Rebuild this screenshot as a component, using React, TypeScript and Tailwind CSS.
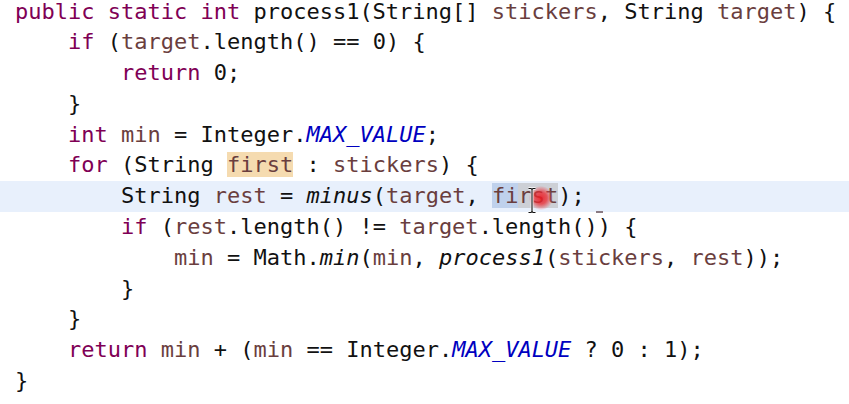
type Kind = "t" | "kw" | "var" | "fld" | "it" | "occ" | "selA" | "selB";
type Token = [string, Kind];

const styles: Record<Kind, string> = {
  t: "text-[#111111]",
  kw: "text-[#7f0055]",
  var: "text-[#6a3e3e]",
  fld: "text-[#0000c0] italic",
  it: "text-[#111111] italic",
  occ: "text-[#6a3e3e] bg-[#f5dbb0]",
  selA: "text-[#6a3e3e] bg-[#bfd1ec]",
  selB: "text-[#6a3e3e] bg-[#cdd0d6]",
};

const lines: { indent: number; tokens: Token[]; current?: boolean }[] = [
  {
    indent: 0,
    tokens: [
      ["public static int", "kw"],
      [" process1(String[] ", "t"],
      ["stickers", "var"],
      [", String ", "t"],
      ["target", "var"],
      [") {", "t"],
    ],
  },
  {
    indent: 4,
    tokens: [
      ["if", "kw"],
      [" (", "t"],
      ["target", "var"],
      [".length() == 0) {", "t"],
    ],
  },
  { indent: 8, tokens: [["return", "kw"], [" 0;", "t"]] },
  { indent: 4, tokens: [["}", "t"]] },
  {
    indent: 4,
    tokens: [
      ["int", "kw"],
      [" ", "t"],
      ["min", "var"],
      [" = Integer.", "t"],
      ["MAX_VALUE", "fld"],
      [";", "t"],
    ],
  },
  {
    indent: 4,
    tokens: [
      ["for", "kw"],
      [" (String ", "t"],
      ["first", "occ"],
      [" : ", "t"],
      ["stickers", "var"],
      [") {", "t"],
    ],
  },
  {
    indent: 8,
    current: true,
    tokens: [
      ["String ", "t"],
      ["rest", "var"],
      [" = ", "t"],
      ["minus", "it"],
      ["(", "t"],
      ["target", "var"],
      [", ", "t"],
      ["fi", "selA"],
      ["rst", "selB"],
      [");", "t"],
    ],
  },
  {
    indent: 8,
    tokens: [
      ["if", "kw"],
      [" (", "t"],
      ["rest", "var"],
      [".length() != ", "t"],
      ["target", "var"],
      [".length()) {", "t"],
    ],
  },
  {
    indent: 12,
    tokens: [
      ["min", "var"],
      [" = Math.", "t"],
      ["min", "it"],
      ["(", "t"],
      ["min", "var"],
      [", ", "t"],
      ["process1", "it"],
      ["(", "t"],
      ["stickers", "var"],
      [", ", "t"],
      ["rest", "var"],
      ["));", "t"],
    ],
  },
  { indent: 8, tokens: [["}", "t"]] },
  { indent: 4, tokens: [["}", "t"]] },
  {
    indent: 4,
    tokens: [
      ["return", "kw"],
      [" ", "t"],
      ["min", "var"],
      [" + (", "t"],
      ["min", "var"],
      [" == Integer.", "t"],
      ["MAX_VALUE", "fld"],
      [" ? 0 : 1);", "t"],
    ],
  },
  { indent: 0, tokens: [["}", "t"]] },
];

export default function App() {
  return (
    <div className="relative h-[404px] w-[849px] overflow-hidden bg-white">
      <div className="-mt-[3.5px] font-['DejaVu_Sans_Mono',monospace] text-[22px] leading-[30.8px]">
        {lines.map((line, i) => (
          <div
            key={i}
            className={`h-[30.8px] whitespace-pre pl-[15px] ${line.current ? "bg-[#e8f0fc]" : ""}`}
          >
            {" ".repeat(line.indent)}
            {line.tokens.map(([text, kind], j) => (
              <span key={j} className={styles[kind]}>
                {text}
              </span>
            ))}
          </div>
        ))}
      </div>

      {/* click indicator + I-beam cursor */}
      <div className="absolute left-[529px] top-[186px] h-[24px] w-[24px] rounded-full bg-[radial-gradient(circle,rgba(236,28,36,0.9)_0%,rgba(236,40,48,0.75)_35%,rgba(240,80,90,0.3)_60%,transparent_72%)]" />
      <svg className="absolute left-[527px] top-[187px]" width="10" height="27" viewBox="0 0 10 27">
        <path d="M1.5 1.5h2.5l1 1 1-1h2.5M5 2.5v22M1.5 25.5h2.5l1-1 1 1h2.5" stroke="#ffffff" strokeWidth="2.6" fill="none" />
        <path d="M1.5 1.5h2.5l1 1 1-1h2.5M5 2.5v22M1.5 25.5h2.5l1-1 1 1h2.5" stroke="#111111" strokeWidth="1.1" fill="none" />
      </svg>
      <div className="absolute left-[596px] top-[211px] h-[2px] w-[7px] bg-[#8a7a82]" />
    </div>
  );
}
